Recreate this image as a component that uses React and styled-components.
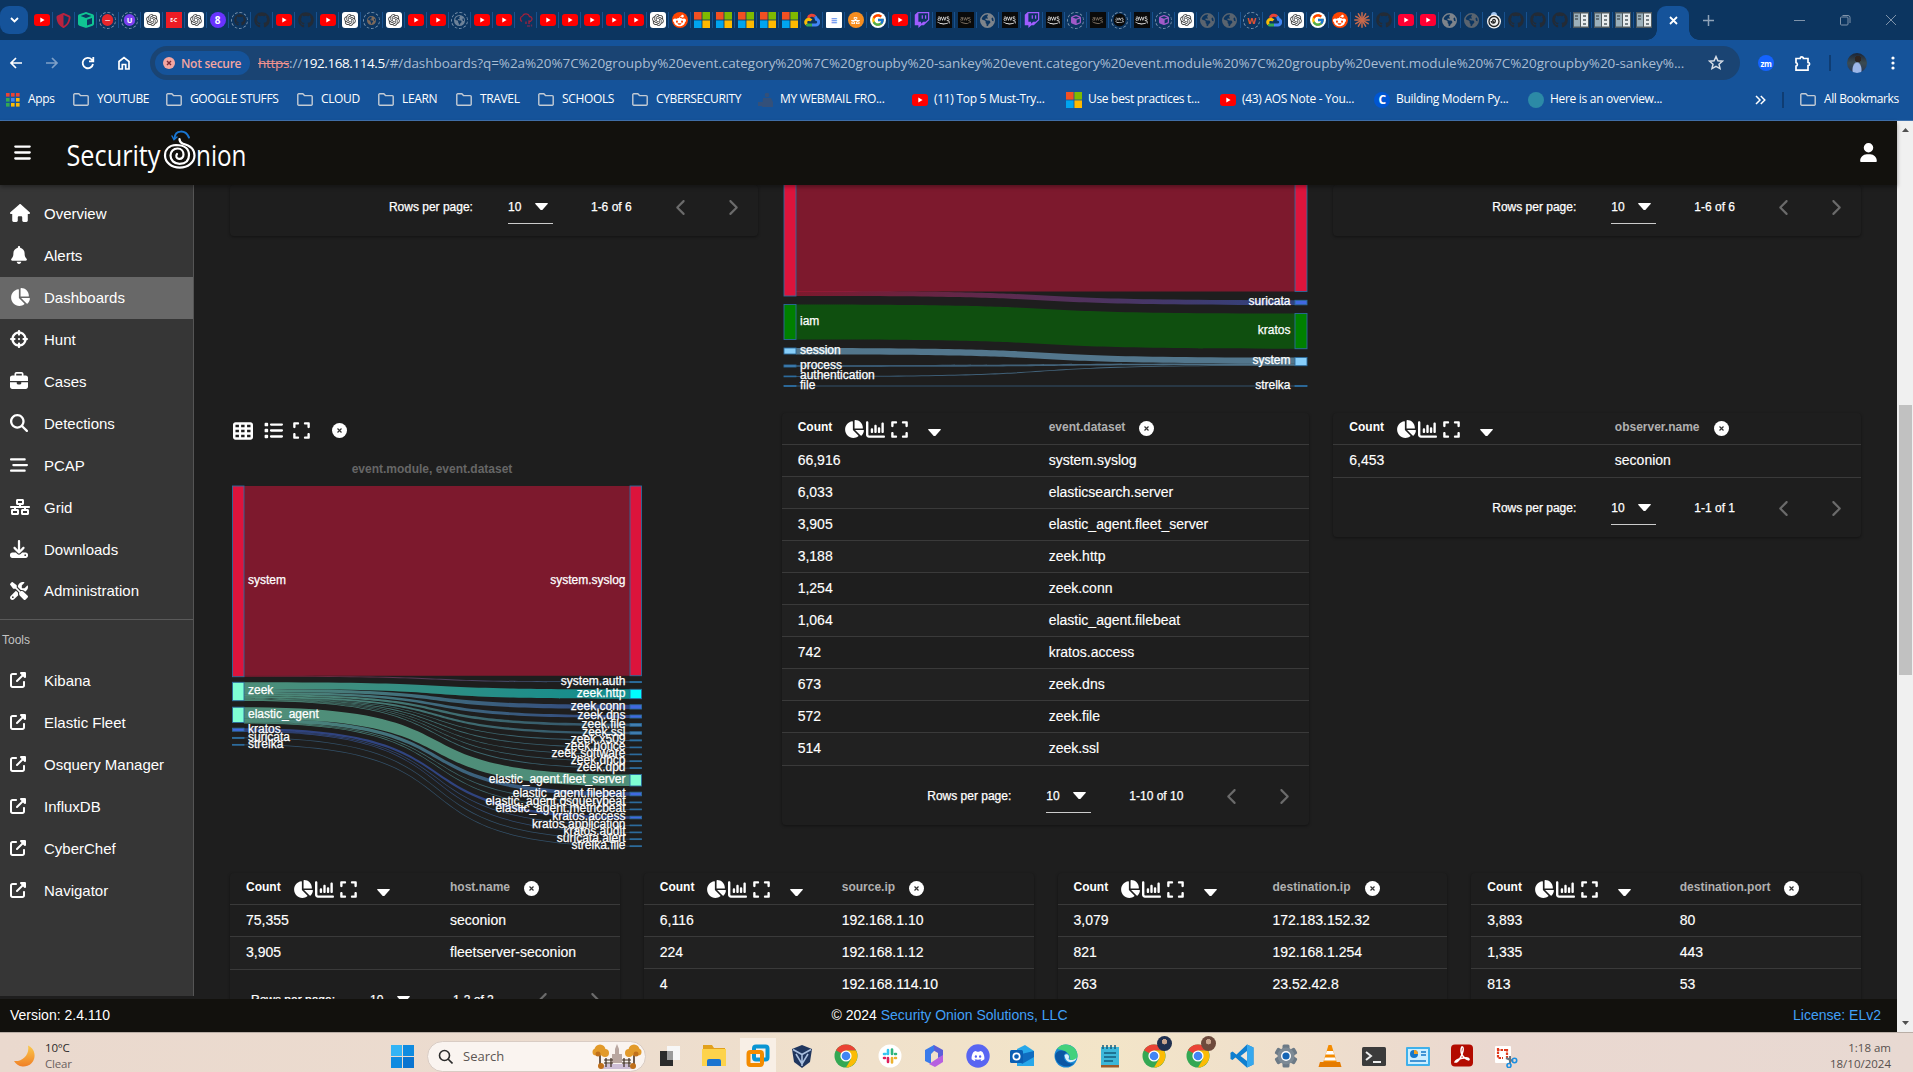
import React from "react";
import styled, { createGlobalStyle, css } from "styled-components";
import {
  FaBars, FaUser, FaHouse, FaBell, FaChartPie, FaCrosshairs, FaBriefcase, FaMagnifyingGlass,
  FaBarsStaggered, FaNetworkWired, FaDownload, FaScrewdriverWrench, FaUpRightFromSquare,
  FaTableCells, FaList, FaExpand, FaChartColumn, FaChevronLeft, FaChevronRight,
  FaGithub, FaRedditAlien, FaTwitch, FaAws, FaCube, FaShieldHalved, FaEarthAmericas, FaDiscord,
} from "react-icons/fa6";
import { RiOpenaiFill } from "react-icons/ri";
import { FcGoogle } from "react-icons/fc";

const ui = `"Open Sans", "Noto Sans", sans-serif`;
const arial = `"Liberation Sans", Arial, sans-serif`;

const Global = createGlobalStyle`
  html, body { margin: 0; background: #1e1e1e; overflow: hidden; }
  * { box-sizing: border-box; }
  svg { display: block; flex: none; }
`;

const Screen = styled.div`
  width: 1913px; height: 1072px; display: flex; flex-direction: column; overflow: hidden;
  font-family: ${arial}; color: #fff;
`;

/* ---------- browser ---------- */
const TabStrip = styled.div`
  height: 40px; flex: none; background: #0c3560; display: flex; align-items: center; font-family: ${ui};
`;
const TabSearch = styled.div`
  width: 28px; height: 28px; margin-right: 3px; border-radius: 9px;
  background: #15539a; display: flex; align-items: center; justify-content: center;
`;
const TabCell = styled.div`
  width: ${(p) => p.$w || 22}px; height: 16px; display: flex; align-items: center; justify-content: center;
  border-right: 1.5px solid ${(p) => (p.$last ? "transparent" : "#17518f")};
`;
const ActiveTab = styled.div`
  width: 32px; height: 34px; margin-left: 2px; align-self: flex-end; background: #15539a; border-radius: 9px 9px 0 0;
  display: flex; align-items: center; justify-content: center; padding-bottom: 6px; position: relative;
  &::before, &::after { content: ""; position: absolute; bottom: 0; width: 10px; height: 10px; }
  &::before { left: -10px; background: radial-gradient(circle at 0 0, transparent 9.5px, #15539a 10px); }
  &::after { right: -10px; background: radial-gradient(circle at 100% 0, transparent 9.5px, #15539a 10px); }
`;
const NewTab = styled.div`margin-left: 14px; width: 14px;`;
const WindowButtons = styled.div`
  margin-left: auto; display: flex; gap: 32px; padding-right: 15px; align-items: center;
`;
const Badge = styled.div`
  width: 16px; height: 16px; border-radius: ${(p) => (p.$r ?? 3)}px; background: ${(p) => p.$bg}; color: ${(p) => p.$c || "#fff"};
  display: flex; align-items: center; justify-content: center; font: 700 ${(p) => p.$fs || 7}px ${ui}; letter-spacing: -0.4px;
  transform: scale(${(p) => p.$scale || 1});
`;
const Ring = styled.div`
  width: 17px; height: 17px; border-radius: 50%; border: 1.4px dashed #7a93ad; color: ${(p) => p.$c};
  display: flex; align-items: center; justify-content: center; font: 700 9px ${ui};
`;

const Toolbar = styled.div`
  height: 46px; flex: none; background: #15539a; display: flex; align-items: center; font-family: ${ui};
  padding-left: 8px;
`;
const NavButton = styled.div`
  width: 16px; margin-right: 20px; flex: none; opacity: ${(p) => (p.$dim ? 0.45 : 1)};
`;
const Address = styled.div`
  width: 1590px; flex: none; height: 34px; margin-left: -2px; border-radius: 17px; background: #1a4473; display: flex; align-items: center;
  padding: 0 16px 0 5px;
`;
const NotSecure = styled.div`
  width: 95px; flex: none; height: 24px; border-radius: 12px; background: #15539a; color: #f4a6a1; display: flex; align-items: center;
  padding-left: 8px; gap: 6px; font-size: 12px; font-weight: 600; letter-spacing: -0.28px; white-space: nowrap;
`;
const Url = styled.div`
  flex: 1; margin-left: 8px; font-size: 13.5px; letter-spacing: -0.06px; color: #a9bdd3; white-space: nowrap;
  b { font-weight: 400; color: #fff; letter-spacing: -0.42px; }
  s { color: #f0928e; letter-spacing: -0.3px; }
`;
const Extensions = styled.div`
  display: flex; align-items: center; margin-left: 16px;
`;
const Slot = styled.div`
  width: ${(p) => p.$w}px; display: flex; justify-content: center;
`;
const VLine = styled.div`width: 2px; height: 16px; background: #0f3d73;`;
const Avatar = styled.div`
  width: 20px; height: 20px; border-radius: 50%;
  background: radial-gradient(circle at 55% 30%, #2d2420 0 3px, transparent 3.5px), radial-gradient(ellipse at 50% 85%, #9db7e8 0 4px, transparent 5px),
    linear-gradient(#1a2436, #3b4b52 50%, #23375e);
`;

const Bookmarks = styled.div`
  height: 35px; flex: none; background: #15539a; border-bottom: 1px solid #4273ae; display: flex; align-items: center;
  padding: 0 14px 7px 6px; font-family: ${ui}; font-size: 12px;
`;
const Bookmark = styled.div`
  display: flex; align-items: center; white-space: nowrap; margin-right: ${(p) => p.$gap ?? 18}px;
`;
const BookmarkText = styled.span`
  width: ${(p) => p.$w}px; margin-left: ${(p) => p.$l ?? 8}px; letter-spacing: ${(p) => p.$ls ?? -0.3}px; line-height: 20px; margin-top: -1px;
`;
const BookmarkEnd = styled.div`
  margin-left: auto; display: flex; align-items: center; white-space: nowrap;
`;

const YT = ({ c = "#f00", w = 16 }) => (
  <svg width={w} height={w * 0.75} viewBox="0 0 16 12"><rect width="16" height="12" rx="3" fill={c} /><path d="M6.3 3.4v5.2L10.6 6z" fill="#fff" /></svg>
);
const MS = ({ s = 16 }) => (
  <svg width={s} height={s} viewBox="0 0 16 16"><path fill="#f25022" d="M0 0h7.6v7.6H0z" /><path fill="#7fba00" d="M8.4 0H16v7.6H8.4z" /><path fill="#00a4ef" d="M0 8.4h7.6V16H0z" /><path fill="#ffb900" d="M8.4 8.4H16V16H8.4z" /></svg>
);
const GCloud = () => (
  <svg width="16" height="14" viewBox="0 0 16 14"><g fill="none" strokeWidth="3"><path d="M4.2 5A4 4 0 0 1 11 3.6" stroke="#ea4335" /><path d="M11 3.6a4 4 0 0 1 1.4 2.6 3 3 0 0 1-.6 5.9H8" stroke="#4285f4" /><path d="M8 12.1H4.6a3 3 0 0 1-2-.8" stroke="#34a853" /><path d="M2.6 11.3A3 3 0 0 1 4.6 6.2q1.5 0 2.7 1.4" stroke="#fbbc05" /></g></svg>
);
const Onion = () => (
  <svg width="16" height="18" viewBox="0 0 16 18"><path d="M5 4C5 0 11 0 11 4z" fill="#9ec3f0" /><circle cx="8" cy="10.5" r="7" fill="#f2f2f2" /><g fill="none" stroke="#222" strokeWidth="1.300"><circle cx="8" cy="10.500" r="5" /><path d="M8 11a1.300 1.300 0 1 1 1.300-1.200c0 3-4 3-4 .3" /></g></svg>
);
const Burst = () => (
  <svg width="16" height="16" viewBox="0 0 16 16" stroke="#c96a4b" strokeWidth="1.500" strokeLinecap="round">
    {[0, 30, 60, 90, 120, 150].map((a) => <path key={a} d="M8 .8v14.400" transform={`rotate(${a} 8 8)`} />)}
  </svg>
);
const Sheets = () => (
  <svg width="16" height="16" viewBox="0 0 16 16"><path fill="#4f5a60" d="M0 0h16v16H0z" /><path fill="#9bb0bb" d="M1 1.500h6v13H1z" /><path fill="#e7ecee" d="M8 1.500h7v13H8z" /><path d="M10 4h3M10 8h3M10 12h3M2 4h3M2 7h3" stroke="#4f5a60" strokeWidth="1.500" /></svg>
);
const CloudRed = () => (
  <svg width="16" height="16" viewBox="0 0 16 16" fill="none" stroke="#a3203a" strokeWidth="1.300"><path d="M4 9.500a3 3 0 0 1 .5-5.500 3.800 3.800 0 0 1 7 .5 2.500 2.500 0 0 1 1 4.800L11 9v3M8 9.500V12" /><path d="M9 14h3M13.500 12.500v2" stroke="#6d2a52" /></svg>
);

const tabIcon = {
  yt: <YT />, yt2: <YT c="#ff0033" />, ms: <MS />, gc: <GCloud />,
  gpt: <Badge $bg="#fff" $c="#333"><RiOpenaiFill size={14} /></Badge>,
  gh: <FaGithub size={16} color="#232b36" />,
  ghr: <Ring $c="#232b36"><FaGithub size={12} /></Ring>,
  sh: <FaShieldHalved size={15} color="#b8233f" />,
  cube: <FaCube size={16} color="#10c493" />,
  rr: <Ring $c="#fff"><Badge $bg="#e8262b" $r={8} $scale={0.75}>—</Badge></Ring>,
  ru: <Ring $c="#fff"><Badge $bg="#7a3ff0" $r={8} $scale={0.75} $fs={10}>U</Badge></Ring>,
  ec: <Badge $bg="#ed1c24" $r={0} $fs={5}>E-C</Badge>,
  pu: <Badge $bg="#6933ff" $r={8} $fs={10}>8</Badge>,
  rb: <Ring $c="#7d6a5c"><FaEarthAmericas size={9} /></Ring>,
  rg: <Ring $c="#6d8299"><FaEarthAmericas size={11} /></Ring>,
  cr: <CloudRed />,
  rd: <Badge $bg="#ff4500" $r={8}><FaRedditAlien size={13} /></Badge>,
  doc: <Badge $bg="#fff" $c="#5b8def" $r={1}>☰</Badge>,
  or: <Badge $bg="#f68d1f" $r={8}><FaNetworkWired size={9} /></Badge>,
  g: <Badge $bg="#fff" $r={8}><FcGoogle size={14} /></Badge>,
  tw: <FaTwitch size={16} color="#a05cff" />,
  aws: <Badge $bg="#0a0a0a" $r={0}><FaAws size={13} /></Badge>,
  awd: <Badge $bg="#0a0a0a" $r={0} $c="#9a8a78"><FaAws size={11} /></Badge>,
  awr: <Ring $c="#d8d0c4"><Badge $bg="#0a0a0a" $r={8} $scale={0.8}><FaAws size={11} /></Badge></Ring>,
  gl: <FaEarthAmericas size={15} color="#7e848b" />,
  gld: <FaEarthAmericas size={15} color="#5a646f" />,
  rc: <Ring $c="#a05ac8"><FaCube size={10} /></Ring>,
  w: <Ring $c="#e8562a">W</Ring>,
  cl: <Burst />, on: <Onion />, st: <Sheets />,
};
const tabs = ("yt sh cube rr ru gpt ec gpt pu ghr gh yt gh yt gpt rb gpt yt yt rg yt yt cr yt yt yt yt yt gpt rd ms ms ms ms ms gc doc or g yt tw aws awd gl aws tw aws rc awd awr aws rc gpt gld gld w gc gpt g rd cl gh yt2 yt2 gl gld on gh gh gh st st st st").split(" ");

const FolderIcon = () => (
  <svg width="16" height="13" viewBox="0 0 16 13" fill="none" stroke="#c3cbd4" strokeWidth="1.400"><path d="M.8 11V2a1 1 0 0 1 1-1.200h4L7.500 2.600h6.700a1 1 0 0 1 1 1V11a1 1 0 0 1-1 1.200H1.800a1 1 0 0 1-1-1.200z" /></svg>
);
const AppsIcon = () => (
  <svg width="14" height="14" viewBox="0 0 14 14">
    {["#ea4335", "#ea4335", "#ea4335", "#34a853", "#4285f4", "#fbbc05", "#34a853", "#fbbc05", "#fbbc05"].map((c, i) => (
      <rect key={i} x={(i % 3) * 5} y={Math.floor(i / 3) * 5} width="3.600" height="3.600" fill={c} />
    ))}
  </svg>
);
const Webmail = () => (
  <svg width="16" height="16" viewBox="0 0 16 16" fill="#33507a"><circle cx="9" cy="3" r="2.300" /><path d="M5 6h8l2 4v5H4zM0 10h5v4H0z" /></svg>
);

const bookmarks = [
  ["f", "YOUTUBE", 51], ["f", "GOOGLE STUFFS", 89], ["f", "CLOUD", 39], ["f", "LEARN", 36], ["f", "TRAVEL", 40],
  ["f", "SCHOOLS", 52], ["f", "CYBERSECURITY", 86, 16],
  ["w", "MY WEBMAIL FRO...", 107, 25], ["y", "(11) Top 5 Must-Try...", 112, 20], ["m", "Use best practices t...", 112, 20],
  ["y", "(43) AOS Note - You...", 115, 17], ["c", "Building Modern Py...", 114, 18], ["t", "Here is an overview...", 112, 0],
];
const bmIcon = {
  f: <FolderIcon />, w: <Webmail />, y: <YT />, m: <MS />,
  c: <Badge $bg="#0056d2" $r={8} $fs={12}>C</Badge>, t: <Badge $bg="#2c8aa6" $r={8} />,
};

function Browser() {
  return (
    <>
      <TabStrip>
        <TabSearch><svg width="9" height="6" viewBox="0 0 9 6" fill="none" stroke="#fff" strokeWidth="1.800"><path d="M1 1l3.500 3.500L8 1" /></svg></TabSearch>
        {tabs.map((t, i) => <TabCell key={i} $w={t === "st" ? 21 : 22} $last={i === tabs.length - 1}>{tabIcon[t]}</TabCell>)}
        <ActiveTab><svg width="9" height="9" viewBox="0 0 9 9" stroke="#fff" strokeWidth="1.800"><path d="M1 1l7 7M8 1L1 8" /></svg></ActiveTab>
        <NewTab><svg width="11" height="11" viewBox="0 0 11 11" stroke="#8fa3b8" strokeWidth="1.500"><path d="M5.500 0v11M0 5.500h11" /></svg></NewTab>
        <WindowButtons>
          <svg width="14" height="12" viewBox="0 0 14 12" stroke="#7f93aa"><path d="M2 6.500h11" /></svg>
          <svg width="14" height="12" viewBox="0 0 14 12" fill="none" stroke="#7f93aa"><rect x="2.500" y="3" width="7.500" height="8" rx="1" /><path d="M4.500 1.500H10a2 2 0 0 1 2 2V9" /></svg>
          <svg width="14" height="12" viewBox="0 0 14 12" stroke="#7f93aa"><path d="M2 1l10 10M12 1L2 11" /></svg>
        </WindowButtons>
      </TabStrip>
      <Toolbar>
        <NavButton><svg width="16" height="16" viewBox="0 0 16 16" fill="none" stroke="#fff" strokeWidth="1.700"><path d="M14 8H3M8 3L3 8l5 5" /></svg></NavButton>
        <NavButton $dim><svg width="16" height="16" viewBox="0 0 16 16" fill="none" stroke="#fff" strokeWidth="1.700"><path d="M2 8h11M8 3l5 5-5 5" /></svg></NavButton>
        <NavButton><svg width="16" height="16" viewBox="0 0 16 16" fill="none" stroke="#fff" strokeWidth="1.800"><path d="M13 9a5.200 5.200 0 1 1-1.300-4.500L13 6M13.300 2v4.300H9" /></svg></NavButton>
        <NavButton><svg width="16" height="16" viewBox="0 0 16 16" fill="none" stroke="#fff" strokeWidth="1.700"><path d="M3 6.500L8 2.500l5 4V14H9.700V9.500H6.300V14H3z" /></svg></NavButton>
        <Address>
          <NotSecure>
            <svg width="12" height="12" viewBox="0 0 12 12"><circle cx="6" cy="6" r="6" fill="#f4a6a1" /><path d="M4 4l4 4M8 4L4 8" stroke="#7a2c3a" strokeWidth="1.400" /></svg>
            Not secure
          </NotSecure>
          <Url><s>https</s>://<b>192.168.114.5</b>/#/dashboards?q=%2a%20%7C%20groupby%20event.category%20%7C%20groupby%20-sankey%20event.category%20event.module%20%7C%20groupby%20event.module%20%7C%20groupby%20-sankey%...</Url>
          <svg width="16" height="16" viewBox="0 0 16 16" fill="none" stroke="#d6dde6" strokeWidth="1.500"><path d="M8 1.600l1.900 4.100 4.500.5-3.400 3 1 4.400L8 11.300l-4 2.300 1-4.400-3.400-3 4.500-.5z" /></svg>
        </Address>
        <Extensions>
          <Slot $w={20}><Badge $bg="#1463ff" $r={8} $fs={8}>zm</Badge></Slot>
          <Slot $w={53}><svg width="17" height="17" viewBox="0 0 17 17" fill="none" stroke="#fff" strokeWidth="1.700"><path d="M2 3.500h4.200a1.600 1.600 0 0 1 3.200 0H14v4a1.600 1.600 0 0 1 0 3.200v4.500H2v-4a1.800 1.800 0 0 0 0-3.500z" /></svg></Slot>
          <VLine />
          <Slot $w={52}><Avatar /></Slot>
          <Slot $w={20}><svg width="4" height="14" viewBox="0 0 4 14" fill="#fff"><circle cx="2" cy="2" r="1.600" /><circle cx="2" cy="7" r="1.600" /><circle cx="2" cy="12" r="1.600" /></svg></Slot>
        </Extensions>
      </Toolbar>
      <Bookmarks>
        <Bookmark><AppsIcon /><BookmarkText $w={27}>Apps</BookmarkText></Bookmark>
        {bookmarks.map(([k, label, w, gap]) => (
          <Bookmark key={label} $gap={gap}>{bmIcon[k]}<BookmarkText $w={w} $l={k === "f" ? 8 : 6} $ls={k === "f" ? -0.35 : -0.3}>{label}</BookmarkText></Bookmark>
        ))}
        <BookmarkEnd>
          <svg width="11" height="10" viewBox="0 0 11 10" fill="none" stroke="#fff" strokeWidth="1.500"><path d="M1 1l4 4-4 4M5.800 1l4 4-4 4" /></svg>
          <Slot $w={34}><VLine /></Slot>
          <FolderIcon /><BookmarkText $w={75} $ls={-0.4}>All Bookmarks</BookmarkText>
        </BookmarkEnd>
      </Bookmarks>
    </>
  );
}

/* ---------- app shell ---------- */
const Page = styled.div`flex: 1; min-height: 0; display: flex;`;
const AppCol = styled.div`width: 1897px; display: flex; flex-direction: column;`;
const AppHeader = styled.header`
  height: 64px; flex: none; background: #12110d; display: flex; align-items: center; padding: 0 19px 1px 13px; position: relative; z-index: 2;
  box-shadow: 0 2px 4px rgba(0,0,0,.35);
`;
const LogoBox = styled.div`margin: 0 auto 0 33px;`;
const AppBody = styled.div`flex: 1; min-height: 0; display: flex; background: #1e1e1e;`;
const Sidebar = styled.nav`
  width: 194px; flex: none; margin-bottom: 3px; background: #363636; border-right: 1px solid #555; padding-top: 8px;
`;
const NavItem = styled.div`
  height: 42px; display: flex; align-items: center; font-size: 15px; padding: 0 0 ${(p) => p.$pb || 0}px 10px;
  background: ${(p) => (p.$active ? "#686868" : "transparent")};
`;
const NavIcon = styled.div`width: 34px; flex: none;`;
const ToolsLabel = styled.div`
  border-top: 1px solid #5a5a5a; margin-top: 6px; height: 40px; padding: 13px 0 0 2px; font-size: 12px; color: #c3c3c3;
`;
const Footer = styled.footer`
  height: 33px; flex: none; background: #12110d; display: grid; grid-template-columns: 1fr auto 1fr; align-items: center; padding: 0 16px 2px 10px;
  font-size: 14px;
  a { color: #41a0f8; }
  span:nth-child(2) { padding-left: 8px; }
  span:last-child { text-align: right; }
`;
const Scrollbar = styled.div`
  width: 16px; background: #f0f0f0; display: flex; flex-direction: column; align-items: center; padding: 7px 0;
`;
const Thumb = styled.div`width: 13px; height: 270px; margin: 273px 0 auto; background: #c1c1c1;`;

function Logo() {
  return (
    <svg width="186" height="46" viewBox="64 130 186 46" fontFamily={`"Open Sans", sans-serif`} fontSize="30" fill="#fff">
      <text x="65.500" y="166" textLength="94" lengthAdjust="spacingAndGlyphs">Security</text>
      <text x="195" y="166" textLength="50.500" lengthAdjust="spacingAndGlyphs">nion</text>
      <g fill="none" stroke="#fff" strokeLinecap="round">
        <path d="M178.500 139c0 2 1 3.500 3 4.500 8 2 12 6 12 12a14.500 12 0 0 1-29.500 0c0-6 4-10 11-10.500 9 0 13 4.500 13 10 0 6-4 8.800-9.500 8.800s-9-3.800-9-8.300c0-4 3-7 7-7s6 3 6 6-2 4.500-4.500 4.300-3.700-2.800-2-4.800" strokeWidth="2.200" />
        <path d="M173.500 138.500c.5-9 11-9 14.500-1" stroke="#1976d2" strokeWidth="2" />
        <path d="M171 136l2 3.500 3-2.500" stroke="#1976d2" strokeWidth="1.500" />
      </g>
    </svg>
  );
}

const nav = [
  ["Overview", FaHouse, 20], ["Alerts", FaBell, 18], ["Dashboards", FaChartPie, 20], ["Hunt", FaCrosshairs, 18], ["Cases", FaBriefcase, 18],
  ["Detections", FaMagnifyingGlass, 18], ["PCAP", FaBarsStaggered, 18], ["Grid", FaNetworkWired, 20], ["Downloads", FaDownload, 18],
  ["Administration", FaScrewdriverWrench, 18],
];
const tools = ["Kibana", "Elastic Fleet", "Osquery Manager", "InfluxDB", "CyberChef", "Navigator"];

/* ---------- dashboard ---------- */
const Content = styled.main`
  flex: 1; min-width: 0; overflow: hidden; padding: 0 36px; display: flex; flex-direction: column;
`;
const Row = styled.div`
  display: grid; grid-template-columns: repeat(${(p) => p.$n}, 1fr); column-gap: 24px; align-items: start; flex: none;
  height: ${(p) => p.$h}px;
`;
const Card = styled.section`
  background: #1e1e1e; border-radius: 4px; box-shadow: 0 1px 3px rgba(0,0,0,.4);
`;
const cell = css`display: grid; grid-template-columns: ${(p) => p.$c}px 1fr; align-items: center; padding: 0 0 2px 16px;`;
const HeadRow = styled.div`
  ${cell} height: 32px; border-bottom: 1px solid #3a3a3a; font-size: 12px; font-weight: 700; padding-bottom: 1px;
`;
const HeadCell = styled.div`display: flex; align-items: center; color: ${(p) => (p.$dim ? "#b0b0b0" : "#fff")};`;
const HeadText = styled.span`margin: -2px ${(p) => p.$mr}px 0 0;`;
const HeadIcons = styled.div`
  display: flex; align-items: center; padding-top: 2px; gap: 2px;
  svg:nth-child(3) { margin-left: 3px; }
  svg:nth-child(4) { margin: 7px 0 0 17px; }
`;
const BodyRow = styled.div`
  ${cell} height: 32px; border-bottom: 1px solid #3a3a3a; font-size: 14px; -webkit-text-stroke: 0.15px #fff;
  &:nth-child(odd) { background: #212121; }
  &:nth-last-child(2) { height: 33px; }
`;
const Pager = styled.div`
  height: 59px; margin-top: ${(p) => p.$mt || 0}px; display: flex; align-items: center; justify-content: flex-end; font-size: 12px; white-space: nowrap; padding-right: 17px;
  -webkit-text-stroke: 0.25px #fff; padding-top: 1px;
`;
const PageSize = styled.div`
  width: 45px; height: 33px; margin: 0 38px 0 35px; border-bottom: 1px solid #ccc; display: flex; align-items: center; justify-content: space-between; padding-right: 5px;
`;
const Chevrons = styled.div`display: flex; margin-left: 41px; gap: 34px; color: #6b6b6b;`;
const ChartTools = styled.div`
  height: 47px; display: flex; align-items: center; padding: 0 0 12px 3px; gap: 11px;
  svg:nth-child(3) { margin-left: -2px; }
  svg:nth-child(4) { margin-left: 10px; }
`;

const Caret = ({ w = 13 }) => (
  <svg width={w} height={w * 0.58} viewBox="0 0 13 7.500"><path d="M.6 0h11.800q.8.300.2 1L7.300 7q-.8.700-1.600 0L.4 1Q-.2.300.6 0z" fill="#fff" /></svg>
);
const CloseDot = () => (
  <svg width="15" height="15" viewBox="0 0 15 15"><circle cx="7.500" cy="7.500" r="7.500" fill="#fff" /><path d="M5.500 5.500l4 4M9.500 5.500l-4 4" stroke="#333" strokeWidth="1.200" /></svg>
);
const PagerBar = ({ range, mt }) => (
  <Pager $mt={mt}>
    Rows per page:
    <PageSize>10<Caret w={13} /></PageSize>
    {range}
    <Chevrons><FaChevronLeft size={17} /><FaChevronRight size={17} /></Chevrons>
  </Pager>
);
function DataCard({ name, col, rows, range }) {
  return (
    <Card>
      <HeadRow $c={col}>
        <HeadCell><HeadText $mr={12}>Count</HeadText>
          <HeadIcons><FaChartPie size={20} /><FaChartColumn size={19} /><FaExpand size={19} /><Caret /></HeadIcons>
        </HeadCell>
        <HeadCell $dim><HeadText $mr={14}>{name}</HeadText><CloseDot /></HeadCell>
      </HeadRow>
      {rows.map(([n, v]) => <BodyRow key={v} $c={col}><span>{n}</span><span>{v}</span></BodyRow>)}
      <PagerBar range={range} />
    </Card>
  );
}

const CR = "#dc143c", AQ = "#7fffd4", RB = "#4169e1", SB = "#4682b4", CY = "#00ffff", GN = "#008000", LS = "#87cefa", BL = "#36a2eb";

/* flow band between two vertical spans */
const Flow = ({ id, x0, x1, a, b, from, to }) => {
  const d = x1 - x0;
  const c1 = x0 + (d * 2) / 3, c2 = x0 + d / 3;
  return (
    <>
      <linearGradient id={id} gradientUnits="userSpaceOnUse" x1={x0} x2={x1} y1="0" y2="0"><stop stopColor={from} /><stop offset="1" stopColor={to} /></linearGradient>
      <path opacity="0.5" fill={`url(#${id})`} d={`M${x0} ${a[0]}C${c1} ${a[0]} ${c2} ${b[0]} ${x1} ${b[0]}V${b[1]}C${c2} ${b[1]} ${c1} ${a[1]} ${x0} ${a[1]}Z`} />
    </>
  );
};
const Node = ({ x, w, s, color }) => (
  <rect x={x} y={s[0]} width={w} height={s[1] - s[0]} fill={color} stroke="#2c6b9c" strokeWidth="0.900" />
);
const Label = styled.text`
  font: 12px ${arial}; fill: #fff; stroke: #fff; stroke-width: 0.25px; text-anchor: ${(p) => (p.$end ? "end" : "start")};
`;

function Sankey({ id, box, x, nw, left, right, links, title }) {
  const [lx, rx] = x;
  return (
    <svg width={box[2]} height={box[3]} viewBox={box.join(" ")}>
      {title && <text x={title.x} y={title.y} textAnchor="middle" fill="#666" fontFamily={arial} fontSize="12" fontWeight="700">{title.text}</text>}
      {links.map((l, i) => <Flow key={i} id={`${id}${i}`} x0={lx + nw} x1={rx} a={l[0]} b={l[1]} from={l[2]} to={l[3]} />)}
      {left.map((n) => <Node key={n[0]} x={lx} w={nw} s={n[1]} color={n[2]} />)}
      {right.map((n) => <Node key={n[0]} x={rx} w={nw} s={n[1]} color={n[2]} />)}
      {left.map((n) => <Label key={n[0]} x={lx + nw + 4} y={(n[1][0] + n[1][1]) / 2 + 2.800}>{n[0]}</Label>)}
      {right.map((n) => <Label key={n[0]} $end x={rx - 4.500} y={(n[1][0] + n[1][1]) / 2 + 2.800}>{n[0]}</Label>)}
    </svg>
  );
}

const moduleRight = [
  ["system.syslog", [486, 675.7], CR], ["system.auth", [681.6, 682.6], BL], ["zeek.http", [689.3, 698.7], CY], ["zeek.conn", [704.8, 709], RB],
  ["zeek.dns", [715, 718], RB], ["zeek.file", [723.6, 726.2], SB], ["zeek.ssl", [731.8, 734.2], SB], ["zeek.x509", [739.9, 740.9], BL],
  ["zeek.notice", [747, 747.8], BL], ["zeek.software", [754, 754.8], BL], ["zeek.dhcp", [760.8, 761.600], SB], ["zeek.dpd", [767.700, 768.500], SB],
  ["elastic_agent.fleet_server", [774.500, 786], AQ], ["elastic_agent.filebeat", [792.200, 795.800], RB], ["elastic_agent.osquerybeat", [802, 802.800], SB],
  ["elastic_agent.metricbeat", [809, 809.800], BL], ["kratos.access", [816.200, 818.800], RB], ["kratos.application", [825, 825.800], BL],
  ["kratos.audit", [832, 832.800], SB], ["suricata.alert", [838.800, 839.600], SB], ["strelka.file", [845.800, 846.600], SB],
];
const moduleLeft = [
  ["system", [486, 676.700], CR], ["zeek", [682.300, 700.700], AQ], ["elastic_agent", [707.200, 722.500], AQ], ["kratos", [728.200, 731.200], RB],
  ["suricata", [737.400, 738.400], SB], ["strelka", [744.400, 745.200], SB],
];
const span = (name) => moduleRight.find((n) => n[0] === name)[1];
const stack = (start, end, color, items) => {
  let y = start;
  const total = items.reduce((s, [n]) => s + (span(n)[1] - span(n)[0]), 0);
  const k = (end - start) / total;
  return items.map(([n, to]) => {
    const s = span(n);
    const h = (s[1] - s[0]) * k;
    const l = [[y, y + h], s, color, to];
    y += h;
    return l;
  });
};
const moduleLinks = [
  [[486, 675.700], [486, 675.700], CR, CR], [[675.700, 676.700], [681.600, 682.600], CR, BL],
  ...stack(682.300, 700.900, AQ, [["zeek.http", CY], ["zeek.conn", RB], ["zeek.dns", RB], ["zeek.file", SB], ["zeek.ssl", SB], ["zeek.x509", SB], ["zeek.notice", SB], ["zeek.software", SB], ["zeek.dhcp", SB], ["zeek.dpd", SB]]),
  ...stack(707.200, 723.500, AQ, [["elastic_agent.fleet_server", AQ], ["elastic_agent.filebeat", RB], ["elastic_agent.osquerybeat", SB], ["elastic_agent.metricbeat", SB]]),
  ...stack(728.200, 732, RB, [["kratos.access", RB], ["kratos.application", SB], ["kratos.audit", SB]]),
  [[737.400, 738.300], span("suricata.alert"), SB, SB], [[744.400, 745.200], span("strelka.file"), SB, SB],
];

const catLeft = [
  ["network", [60, 296], CR], ["iam", [304.500, 339.500], GN], ["session", [348, 354], LS], ["process", [365, 367], SB],
  ["authentication", [376, 376.800], BL], ["file", [385.500, 386.500], SB],
].filter((n) => n[1][1] > 0);
const catRight = [
  ["zeek", [60, 291.500], CR], ["suricata", [300.300, 304.800], RB], ["kratos", [313.500, 348.700], GN], ["system", [357.500, 365.700], LS],
  ["strelka", [385.500, 386.500], SB],
];
const catLinks = [
  [[60, 291.500], [60, 291.500], CR, CR], [[291, 296], [300.300, 305], CR, RB], [[304.500, 339.500], [313.500, 348.700], GN, GN],
  [[348, 354.500], [357.500, 363.500], LS, LS], [[365, 367], [363.500, 365], SB, LS], [[376, 377], [365, 365.800], SB, LS], [[385.500, 386.500], [385.500, 386.500], SB, SB],
];

const datasets = [["66,916", "system.syslog"], ["6,033", "elasticsearch.server"], ["3,905", "elastic_agent.fleet_server"], ["3,188", "zeek.http"],
  ["1,254", "zeek.conn"], ["1,064", "elastic_agent.filebeat"], ["742", "kratos.access"], ["673", "zeek.dns"], ["572", "zeek.file"], ["514", "zeek.ssl"]];

/* ---------- taskbar ---------- */
const Taskbar = styled.div`
  height: 40px; flex: none; border-top: 1px solid #b9aea6; display: flex; align-items: center; padding-top: 7px;
  background: linear-gradient(90deg, #ead9ce 0, #ecdccf 30%, #f3e5c8 58%, #ead8d0 78%, #e8d9d2 100%);
  font-family: ${ui}; font-size: 11.5px; color: #2a2a2a;
`;
const Weather = styled.div`width: 380px; padding-left: 13px; display: flex; gap: 9px; align-items: center; line-height: 16px; letter-spacing: -0.2px; div > div:last-child { color: #6a625e; } `;
const Tile = styled.div`
  width: 44px; height: 36px; display: flex; align-items: center; justify-content: center;
  ${(p) => p.$on && css`background: linear-gradient(90deg, transparent 4px, #f8efe6 4px 40px, transparent 40px); `}
`;
const SearchPill = styled.div`
  width: 219px; height: 31px; margin: 0 2px 0 3px; border-radius: 16px; background: #faf4f0; border: 1px solid #d9ccc4; display: flex; align-items: center; padding: 0 3px 0 10px; gap: 10px;
  font-size: 13px; color: #5c5653; svg:last-child { margin-left: auto; }
`;
const Clock = styled.div`margin-left: auto; padding-right: 22px; text-align: right; line-height: 16px; color: #57504d; letter-spacing: 0;`;

const Svg = ({ children, s = 24 }) => <svg width={s} height={s} viewBox="0 0 24 24">{children}</svg>;
const Chrome = ({ badge }) => (
  <Svg>
    <circle cx="12" cy="12" r="11.500" fill="#34a853" />
    <path d="M12 12L2 6.300A11.500 11.500 0 0 1 22 6.300L22 6.500H12z" fill="#ea4335" />
    <path d="M12 6.500h10A11.500 11.500 0 0 1 12 23.500L17 15z" fill="#fbbc05" />
    <circle cx="12" cy="12" r="5.600" fill="#fff" /><circle cx="12" cy="12" r="4.300" fill="#4285f4" />
  </Svg>
);
const ProfileChrome = styled.div`
  position: relative;
  &::after {
    content: ""; position: absolute; right: -6px; top: -8px; width: 15px; height: 15px; border-radius: 50%;
    background: radial-gradient(circle at 50% 38%, #c9a58e 0 2.5px, transparent 3px), ${(p) => p.$badge};
  }
`;
const icons = [
  <Svg><path fill="#2b2b2b" d="M2 7h13v15H2z" /><path fill="#f7f7f7" d="M9 2h13v14H9z" /><path fill="#9b9b9b" d="M9 7h6v9H9z" /></Svg>,
  <Svg><path fill="#e2a11c" d="M1 1h9l2 3h11v6H1z" /><path fill="#fdd34b" d="M0 5h24v17H0z" /><path fill="#1b74d0" d="M5 17q0-2 2-2h10q2 0 2 2v5H5z" /></Svg>,
  <Svg><g fill="none" strokeWidth="4"><rect x="8" y="2.500" width="13.500" height="13" rx="2" stroke="#0a95d3" /><rect x="2.500" y="8" width="13.500" height="13" rx="2" stroke="#f38b00" /></g></Svg>,
  <Svg><path fill="#20365e" d="M12 1l10 4-2 13-8 6-8-6L2 5z" /><path fill="none" stroke="#a9bfde" strokeWidth="1.600" d="M3 5.500l9 5 9-5M12 10.500V22M6 10l6 10 6-10" /></Svg>,
  <Chrome />,
  <Svg><circle cx="12" cy="12" r="11.500" fill="#fff" /><g strokeWidth="2.600" strokeLinecap="round"><path d="M10 6v4M6 10h1.500" stroke="#36c5f0" /><path d="M14 5.500V10M17 10h1" stroke="#2eb67d" /><path d="M14 14v4.500M17 14h1" stroke="#ecb22e" /><path d="M10 14v4M6 14h1" stroke="#e01e5a" /></g></Svg>,
  <Svg><path fill="#5b5fd8" d="M12 1l9 5v6l-5 2V9L9 5z" /><path fill="#3a7bea" d="M12 1L3 6v11l6 3V10l3-3z" /><path fill="#b660e0" d="M21 11v7l-8 5-6-3 6-4 3-2z" /></Svg>,
  <Svg><circle cx="12" cy="12" r="11.700" fill="#5865f2" /><FaDiscord x="5" y="5" size={14} color="#fff" /></Svg>,
  <Svg><path fill="#28a8ea" d="M7 5l8-4 9 6v15H7z" /><path fill="#0f6cc0" d="M7 11l17-4v6L12 20z" /><rect y="6" width="13" height="13" rx="1.500" fill="#0a5fb4" /><circle cx="6.500" cy="12.500" r="3.200" fill="none" stroke="#fff" strokeWidth="1.700" /></Svg>,
  <Svg><circle cx="12" cy="12" r="11.500" fill="#1b8bd6" /><path fill="#43d17c" d="M3 5a11.500 11.500 0 0 1 20.500 7c0 4-6 5-8 3 2-5-5-9-12.500-10z" /><path fill="#0b57a4" d="M1 12c1-6 9-7 12-3-5 0-5 11 7 10.500A11.500 11.500 0 0 1 1 12z" /><path d="M10.500 11c2-2 6 0 4 4 2 2 6 1 8-1-1 5-11 7-12-3z" fill="#fff" opacity=".85" /></Svg>,
  <Svg><path fill="#3cb7d9" d="M3 3h18v18H3z" /><path fill="#9c5a2b" d="M3 21h18v2.500H3z" /><path d="M6 9h12M6 13h12M6 17h9" stroke="#155e7e" strokeWidth="1.600" /><path d="M5 1v4M9 1v4M13 1v4M17 1v4" stroke="#155e7e" strokeWidth="1.500" /></Svg>,
  <ProfileChrome $badge="#20304f"><Chrome /></ProfileChrome>, <ProfileChrome $badge="#6d4a3c"><Chrome /></ProfileChrome>,
  <Svg><path fill="#0f7fd0" d="M17 .5l6.500 3v17l-6.500 3L6 13l-3.500 3L.5 15V9l2-1L6 11z" /><path fill="#f0e6da" d="M17 7v10l-6.500-5z" /><path fill="#36a8ee" d="M17 .5l6.500 3v17l-6.500 3z" /><path fill="#0f7fd0" d="M.5 9l2-1.500L17 19v4.500z" /></Svg>,
  <Svg>{[0, 60, 120].map((a) => <rect key={a} x="8.500" y="0.500" width="7" height="23" rx="1.500" fill="#6c7a86" transform={`rotate(${a} 12 12)`} />)}<circle cx="12" cy="12" r="8.500" fill="#7d8a95" /><circle cx="12" cy="12" r="5" fill="#fff" /><circle cx="12" cy="12" r="3.600" fill="#1565b5" /></Svg>,
  <Svg><path fill="#f48b00" d="M10.500 1h3L19 19H5z" /><path fill="#fff" d="M8.800 7h6.400l1 3.500H7.700zM6.800 13.500h10.400l.8 3H6z" /><path fill="#e57b00" d="M2 18h20l1.500 5H.5z" /></Svg>,
  <Svg><rect x="0" y="3" width="24" height="19" rx="1.500" fill="#3b3b3b" /><path d="M4 8l5 4-5 4M11 18h8" fill="none" stroke="#eee" strokeWidth="2" /></Svg>,
  <Svg><rect x="0" y="3" width="24" height="19" rx="1" fill="#3fb0ea" /><rect x="2" y="5" width="20" height="15" fill="#cdeeff" /><circle cx="8" cy="10" r="4" fill="#1678c8" /><path fill="#f6a21e" d="M8 10V6a4 4 0 0 1 4 4z" /><path d="M15 8h5M15 11h5M4 17h16" stroke="#1678c8" strokeWidth="1.500" /></Svg>,
  <Svg><rect x="1" y="0.500" width="22" height="22" rx="4" fill="#b30b00" /><path d="M5 18c1-3 13-6 14-3s-8-2-8-8 3-5 2 0-5 12-8 11z" fill="none" stroke="#fff" strokeWidth="1.500" /></Svg>,
  <Svg><rect x="1" y="2" width="16" height="17" rx="1" fill="#fff" /><path d="M3 6h11M4 4v10h5M13 5v9" fill="none" stroke="#e03a1c" strokeWidth="2.200" strokeDasharray="2.500 1" /><path d="M12 14l7 3M16 12v8" stroke="#6b7680" strokeWidth="2" /><circle cx="20.500" cy="16.500" r="2.200" fill="none" stroke="#1c8fe0" strokeWidth="1.600" /><circle cx="15" cy="21.500" r="2" fill="none" stroke="#1c8fe0" strokeWidth="1.600" /></Svg>,
];
const Autumn = () => (
  <svg width="50" height="28" viewBox="0 0 50 28">
    <path d="M14 22h22l6 5H8z" fill="#cdbed6" /><path d="M20 21V12h3V7l2-5 2 5v5h3v9z" fill="#b9a7a0" />
    <path d="M8 8v15M42 8v15" stroke="#4a3423" strokeWidth="1.600" />
    <g fill="#e29a2a"><circle cx="8" cy="8" r="5.500" /><circle cx="4" cy="10" r="3.500" /><circle cx="13" cy="11" r="4" /><circle cx="42" cy="8" r="5.500" /><circle cx="46" cy="10" r="3.500" /><circle cx="37" cy="11" r="4" /></g>
    <g fill="#c0701a"><circle cx="6" cy="12" r="2.500" /><circle cx="44" cy="12" r="2.500" /><circle cx="9" cy="24" r="3" /><circle cx="41" cy="24" r="3" /></g>
    <path d="M12 18h9M12 21h9M14 16v9M19 16v9M30 18h9M30 21h9M32 16v9M37 16v9" stroke="#3d2c20" strokeWidth="1.200" fill="none" />
  </svg>
);

export default function App() {
  return (
    <Screen>
      <Global />
      <Browser />
      <Page>
        <AppCol>
          <AppHeader>
            <FaBars size={19} />
            <LogoBox><Logo /></LogoBox>
            <FaUser size={19} />
          </AppHeader>
          <AppBody>
            <Sidebar>
              {nav.map(([label, Icon, s]) => (
                <NavItem key={label} $active={label === "Dashboards"} $pb={label === "Administration" ? 3 : 2}><NavIcon><Icon size={s} /></NavIcon>{label}</NavItem>
              ))}
              <ToolsLabel>Tools</ToolsLabel>
              {tools.map((t) => <NavItem key={t}><NavIcon><FaUpRightFromSquare size={16} /></NavIcon>{t}</NavItem>)}
            </Sidebar>
            <Content>
              <Row $n={3} $h={228}>
                <Card><PagerBar range="1-6 of 6" mt={-8} /></Card>
                <Sankey id="cat" box={[782, 185, 527, 210]} x={[784, 1295]} nw={12} left={catLeft} right={catRight} links={catLinks} />
                <Card><PagerBar range="1-6 of 6" mt={-8} /></Card>
              </Row>
              <Row $n={3} $h={460}>
                <div>
                  <ChartTools><FaTableCells size={20} /><FaList size={19} /><FaExpand size={19} /><CloseDot /></ChartTools>
                  <Sankey id="mod" box={[230, 460, 420, 400]} x={[232.5, 630]} nw={11.5} left={moduleLeft} right={moduleRight} links={moduleLinks}
                    title={{ x: 432, y: 473, text: "event.module, event.dataset" }} />
                </div>
                <DataCard name="event.dataset" col={251} rows={datasets} range="1-10 of 10" />
                <DataCard name="observer.name" col={265.5} rows={[["6,453", "seconion"]]} range="1-1 of 1" />
              </Row>
              <Row $n={4} $h={300}>
                <DataCard name="host.name" col={204} rows={[["75,355", "seconion"], ["3,905", "fleetserver-seconion"]]} range="1-2 of 2" />
                <DataCard name="source.ip" col={182} rows={[["6,116", "192.168.1.10"], ["224", "192.168.1.12"], ["4", "192.168.114.10"]]} range="1-3 of 3" />
                <DataCard name="destination.ip" col={199} rows={[["3,079", "172.183.152.32"], ["821", "192.168.1.254"], ["263", "23.52.42.8"]]} range="1-10 of 10" />
                <DataCard name="destination.port" col={192.5} rows={[["3,893", "80"], ["1,335", "443"], ["813", "53"]]} range="1-10 of 10" />
              </Row>
            </Content>
          </AppBody>
          <Footer>
            <span>Version: 2.4.110</span>
            <span>© 2024 <a>Security Onion Solutions, LLC</a></span>
            <span><a>License: ELv2</a></span>
          </Footer>
        </AppCol>
        <Scrollbar>
          <svg width="7" height="4" viewBox="0 0 7 4"><path d="M0 4l3.500-4L7 4z" fill="#505050" /></svg>
          <Thumb />
          <svg width="7" height="4" viewBox="0 0 7 4"><path d="M0 0l3.500 4L7 0z" fill="#505050" /></svg>
        </Scrollbar>
      </Page>
      <Taskbar>
        <Weather>
          <svg width="23" height="23" viewBox="0 0 23 23"><defs><linearGradient id="moon" x2="0" y2="1"><stop stopColor="#fbc94b" /><stop offset="1" stopColor="#f07f26" /></linearGradient></defs><path d="M15 .5A11 11 0 1 1 1 16C9 17 17 10 15 .5z" fill="url(#moon)" /></svg>
          <div><div>10°C</div><div>Clear</div></div>
        </Weather>
        <Tile><svg width="23" height="23" viewBox="0 0 23 23" fill="#0f8be0"><path d="M0 0h11v11H0z" fill="#33b4f5" /><path d="M12 0h11v11H12zM0 12h11v11H0z" /><path d="M12 12h11v11H12z" fill="#0a74d0" /></svg></Tile>
        <SearchPill>
          <svg width="15" height="15" viewBox="0 0 15 15" fill="none" stroke="#2b2b2b" strokeWidth="1.600"><circle cx="6.500" cy="6.500" r="5" /><path d="M10 10l4.500 4.500" /></svg>
          Search <Autumn />
        </SearchPill>
        {icons.map((ic, i) => <Tile key={i} $on={i === 2}>{ic}</Tile>)}
        <Clock>1:18 am<br />18/10/2024</Clock>
      </Taskbar>
    </Screen>
  );
}
